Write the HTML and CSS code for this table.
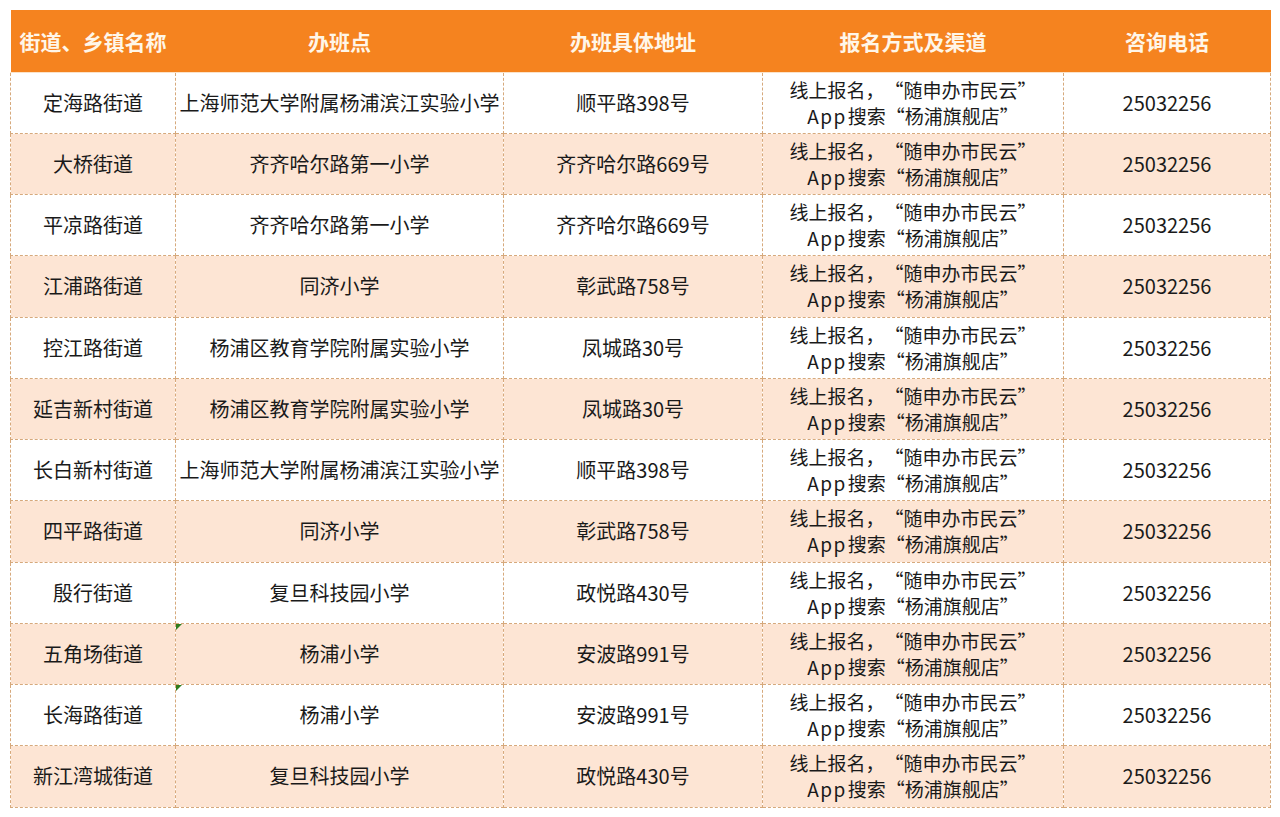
FILE: index.html
```html
<!DOCTYPE html>
<html lang="zh-CN">
<head>
<meta charset="utf-8">
<title>办班点</title>
<link rel="stylesheet" href="styles.css">
</head>
<body>
<table class="sheet">
  <colgroup>
    <col class="c1"><col class="c2"><col class="c3"><col class="c4"><col class="c5">
  </colgroup>
  <thead>
    <tr><th>街道、乡镇名称</th><th>办班点</th><th>办班具体地址</th><th>报名方式及渠道</th><th>咨询电话</th></tr>
  </thead>
  <tbody>
    <tr><td>定海路街道</td><td>上海师范大学附属杨浦滨江实验小学</td><td>顺平路398号</td><td class="way">线上报名，<span class="qo">“</span>随申办市民云<span class="qc">”</span><br><span class="lat">App</span>搜索<span class="qo">“</span>杨浦旗舰店<span class="qc">”</span></td><td>25032256</td></tr>
    <tr><td>大桥街道</td><td>齐齐哈尔路第一小学</td><td>齐齐哈尔路669号</td><td class="way">线上报名，<span class="qo">“</span>随申办市民云<span class="qc">”</span><br><span class="lat">App</span>搜索<span class="qo">“</span>杨浦旗舰店<span class="qc">”</span></td><td>25032256</td></tr>
    <tr><td>平凉路街道</td><td>齐齐哈尔路第一小学</td><td>齐齐哈尔路669号</td><td class="way">线上报名，<span class="qo">“</span>随申办市民云<span class="qc">”</span><br><span class="lat">App</span>搜索<span class="qo">“</span>杨浦旗舰店<span class="qc">”</span></td><td>25032256</td></tr>
    <tr><td>江浦路街道</td><td>同济小学</td><td>彰武路758号</td><td class="way">线上报名，<span class="qo">“</span>随申办市民云<span class="qc">”</span><br><span class="lat">App</span>搜索<span class="qo">“</span>杨浦旗舰店<span class="qc">”</span></td><td>25032256</td></tr>
    <tr><td>控江路街道</td><td>杨浦区教育学院附属实验小学</td><td>凤城路30号</td><td class="way">线上报名，<span class="qo">“</span>随申办市民云<span class="qc">”</span><br><span class="lat">App</span>搜索<span class="qo">“</span>杨浦旗舰店<span class="qc">”</span></td><td>25032256</td></tr>
    <tr><td>延吉新村街道</td><td>杨浦区教育学院附属实验小学</td><td>凤城路30号</td><td class="way">线上报名，<span class="qo">“</span>随申办市民云<span class="qc">”</span><br><span class="lat">App</span>搜索<span class="qo">“</span>杨浦旗舰店<span class="qc">”</span></td><td>25032256</td></tr>
    <tr><td>长白新村街道</td><td>上海师范大学附属杨浦滨江实验小学</td><td>顺平路398号</td><td class="way">线上报名，<span class="qo">“</span>随申办市民云<span class="qc">”</span><br><span class="lat">App</span>搜索<span class="qo">“</span>杨浦旗舰店<span class="qc">”</span></td><td>25032256</td></tr>
    <tr><td>四平路街道</td><td>同济小学</td><td>彰武路758号</td><td class="way">线上报名，<span class="qo">“</span>随申办市民云<span class="qc">”</span><br><span class="lat">App</span>搜索<span class="qo">“</span>杨浦旗舰店<span class="qc">”</span></td><td>25032256</td></tr>
    <tr><td>殷行街道</td><td>复旦科技园小学</td><td>政悦路430号</td><td class="way">线上报名，<span class="qo">“</span>随申办市民云<span class="qc">”</span><br><span class="lat">App</span>搜索<span class="qo">“</span>杨浦旗舰店<span class="qc">”</span></td><td>25032256</td></tr>
    <tr><td>五角场街道</td><td class="flag">杨浦小学</td><td>安波路991号</td><td class="way">线上报名，<span class="qo">“</span>随申办市民云<span class="qc">”</span><br><span class="lat">App</span>搜索<span class="qo">“</span>杨浦旗舰店<span class="qc">”</span></td><td>25032256</td></tr>
    <tr><td>长海路街道</td><td class="flag">杨浦小学</td><td>安波路991号</td><td class="way">线上报名，<span class="qo">“</span>随申办市民云<span class="qc">”</span><br><span class="lat">App</span>搜索<span class="qo">“</span>杨浦旗舰店<span class="qc">”</span></td><td>25032256</td></tr>
    <tr><td>新江湾城街道</td><td>复旦科技园小学</td><td>政悦路430号</td><td class="way">线上报名，<span class="qo">“</span>随申办市民云<span class="qc">”</span><br><span class="lat">App</span>搜索<span class="qo">“</span>杨浦旗舰店<span class="qc">”</span></td><td>25032256</td></tr>
  </tbody>
</table>
</body>
</html>
```
FILE: styles.css
```css
html, body {
  margin: 0;
  padding: 0;
  background: #ffffff;
}
body {
  padding: 10px 10px 0 10px;
  font-family: "Noto Sans CJK SC", "Noto Sans", sans-serif;
  color: #1a1a1a;
}
.sheet {
  width: 1260px;
  border-collapse: collapse;
  table-layout: fixed;
}
.c1 { width: 165px; }
.c2 { width: 328px; }
.c3 { width: 259px; }
.c4 { width: 301px; }
.c5 { width: 207px; }
.sheet thead tr {
  height: 62px;
}
.sheet tbody tr {
  height: 61.25px;
}
.sheet th {
  padding: 0;
  background: #f5831f;
  color: #fff6e8;
  font-size: 21px;
  font-weight: 700;
  text-align: center;
  vertical-align: middle;
  border-bottom: 1px solid #fbe3c9;
}
.sheet td {
  box-sizing: border-box;
  padding: 0;
  font-size: 20px;
  line-height: 24px;
  text-align: center;
  vertical-align: middle;
  border: 1px dashed #d6a97c;
  white-space: nowrap;
  position: relative;
}
.sheet td.way {
  font-size: 19px;
  line-height: 26px;
}
.lat {
  letter-spacing: 1.5px;
  margin-right: 1px;
}
.qo, .qc {
  display: inline-block;
  width: 1em;
}
.qo { text-align: right; }
.qc { text-align: left; }
.sheet tbody tr:nth-child(even) td {
  background: #fde5d4;
}
.sheet td.flag::before {
  content: "";
  position: absolute;
  left: 0;
  top: 0;
  width: 0;
  height: 0;
  border-top: 6px solid #2f7d1f;
  border-right: 6px solid transparent;
}
```
